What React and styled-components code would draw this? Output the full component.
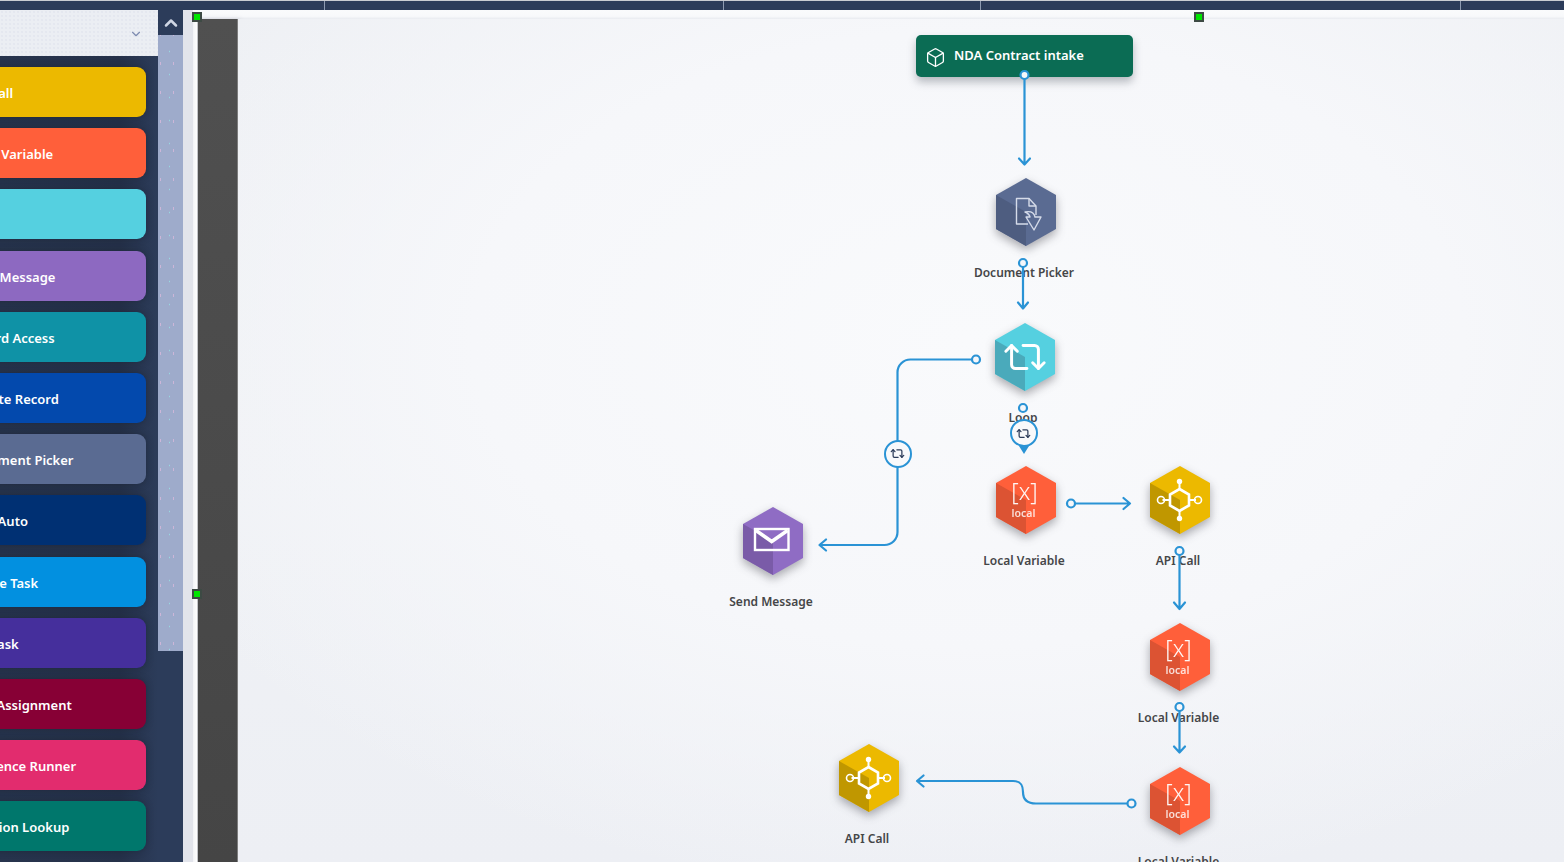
import React from 'react';
import styled, { createGlobalStyle } from 'styled-components';
import { Box, ChevronDown, ChevronUp, Repeat2 } from 'lucide-react';

const Global = createGlobalStyle`
  html, body { margin: 0; padding: 0; height: 100%; overflow: hidden; background: #2c3c5a; }
  body { font-family: "Noto Sans", "Open Sans", sans-serif; }
  #root { height: 100%; }
`;

const Page = styled.div`
  width: 1564px; height: 862px; display: flex; flex-direction: column; overflow: hidden;
`;
const TopBar = styled.div`
  height: 9px; flex: none; display: flex; background: #2c3c5a; border-top: 1px solid #c9ccd2;
  background-image: radial-gradient(#3a4c6e 0.6px, transparent 0.7px); background-size: 4px 4px;
`;
const TopSegment = styled.div`
  flex: ${p => (p.$w ? `0 0 ${p.$w}px` : '1')}; box-sizing: border-box;
  border-right: ${p => (p.$w ? '1px solid #8f9cb3' : 'none')};
`;
const Main = styled.div`
  flex: 1; display: flex; min-height: 0;
`;
const Sidebar = styled.aside`
  width: 183px; flex: none; display: flex; background: #2c3c5a;
  background-image: radial-gradient(rgba(255,255,255,.035) 0.6px, transparent 0.7px); background-size: 4px 4px;
`;
const Palette = styled.div`
  width: 158px; flex: none; display: flex; flex-direction: column; overflow: hidden;
  background: linear-gradient(90deg, #27344d 0, #253149 120px, #2c3c5a 158px);
`;
const PaletteHead = styled.div`
  height: 46px; flex: none; display: flex; align-items: center; justify-content: flex-end;
  padding: 0 15px 0 0; box-sizing: border-box; background: #ebeef3; color: #7d8bb0;
  background-image: radial-gradient(#dcdfe9 0.6px, transparent 0.8px); background-size: 4px 4px;
  svg { margin-top: 1px; }
`;
const ToolList = styled.div`
  display: flex; flex-direction: column; gap: 11.2px; padding-top: 11px; margin-left: -90px;
`;
const Tool = styled.div`
  width: 236px; height: 50px; flex: none; box-sizing: border-box; padding-left: 55px;
  display: flex; align-items: center; border-radius: 9px; background-color: ${p => p.$bg};
  color: #fff; font-size: 13px; font-weight: 600; white-space: nowrap;
  box-shadow: 0 0 7px rgba(20,28,45,.45);
  span { position: relative; top: 1px; }
`;
const SideStrip = styled.div`
  width: 25px; flex: none; display: flex; flex-direction: column;
`;
const CollapseButton = styled.div`
  height: 25px; flex: none; display: flex; align-items: center; justify-content: center; color: #cfd6e4;
`;
const StripBody = styled.div`
  height: 616px; flex: none; background: #9eabcb;
  background-image:
    radial-gradient(rgba(150,235,235,.7) 0.5px, transparent 0.8px),
    radial-gradient(rgba(235,190,225,.6) 0.5px, transparent 0.8px);
  background-size: 17px 23px, 13px 29px; background-position: 3px 5px, 9px 14px;
`;
const Canvas = styled.main`
  position: relative; flex: 1; display: flex; min-width: 0; overflow: hidden;
  background: linear-gradient(90deg, #e2e4eb, #eff0f5);
`;
const Gutter = styled.div`
  width: 10px; flex: none;
`;
const Sheet = styled.div`
  flex: 1; min-width: 0; display: flex; flex-direction: column;
`;
const SheetTop = styled.div`
  height: 9px; flex: none; background: linear-gradient(180deg, #fafbfc 0, #f8f9fb 70%, #e9ebf0 100%);
`;
const SheetBody = styled.div`
  flex: 1; display: flex; min-height: 0;
`;
const WhiteEdge = styled.div`
  width: 5px; flex: none; background: linear-gradient(90deg, #f2f3f6, #fff 70%, #a9abb0 100%);
`;
const Rail = styled.div`
  width: 39px; flex: none; background: linear-gradient(180deg, #505050, #454545);
  border-right: 1px solid #7d7d7d; box-shadow: 2px 0 4px rgba(120,125,140,.25);
`;
const Flow = styled.div`
  flex: 1;
  background:
    radial-gradient(900px 560px at 55% 38%, #f9fafc 0, #f6f7fa 55%, rgba(246,247,250,0) 100%),
    linear-gradient(180deg, #eef0f4, #eff1f5 60%, #edeff4);
`;
const Wires = styled.svg`
  position: absolute; left: 0; top: 0; width: 1381px; height: 852px; z-index: 3; pointer-events: none;
`;
const Wire = styled.path`
  fill: none; stroke: #2a93d5; stroke-width: 2.2; stroke-linecap: round; stroke-linejoin: round;
`;
const Port = styled.circle`
  fill: #f6f7fa; stroke: #2a93d5; stroke-width: 2.2;
`;
const Handle = styled.div`
  position: absolute; z-index: 4; left: ${p => p.$x - 183 - 5}px; top: ${p => p.$y - 10 - 5}px;
  width: 10px; height: 10px; box-sizing: border-box; background: #00e600; border: 2px solid #3d4a44;
`;
const StartNode = styled.div`
  position: absolute; z-index: 2; left: 733px; top: 25px; width: 217px; height: 42px; box-sizing: border-box;
  display: flex; align-items: center; gap: 8px; padding: 0 0 3px 9px; border-radius: 5px;
  background: #0b6c54; color: #fff; font-size: 13px; font-weight: 600;
  box-shadow: 0 5px 9px rgba(60,70,80,.35);
  svg { margin-top: 5px; }
`;
const Node = styled.div`
  position: absolute; z-index: 2; left: ${p => p.$x - 183 - 80}px; top: ${p => p.$y - 10 - 34}px;
  width: 160px; display: flex; flex-direction: column; align-items: center;
`;
const HexArt = styled.svg`
  width: 60px; height: 68px; display: block; margin-left: ${p => p.$shift ?? 3}px; overflow: visible;
  filter: drop-shadow(0 4px 5px rgba(40,40,50,.38));
`;
const NodeLabel = styled.div`
  margin-top: 18px; line-height: 18px; font-size: 12px; font-weight: 600; color: #454648; white-space: nowrap;
`;
const Badge = styled.div`
  position: absolute; z-index: 4; left: ${p => p.$x - 183 - 14}px; top: ${p => p.$y - 10 - 14}px;
  width: 28px; height: 28px; box-sizing: border-box; border-radius: 50%; border: 2.4px solid #2a93d5;
  background: #f8f9fb; color: #2c3c5a; display: flex; align-items: center; justify-content: center;
  ${p => p.$pin && `
    &::after {
      content: ''; position: absolute; left: 50%; bottom: -9px; margin-left: -5px;
      border-left: 5px solid transparent; border-right: 5px solid transparent; border-top: 8px solid #2a93d5;
    }
  `}
`;
const HexWord = styled.text`
  fill: #fff; text-anchor: middle; font-family: "Noto Sans", sans-serif;
  font-size: ${p => p.$size}px; font-weight: ${p => p.$weight}; opacity: ${p => p.$opacity};
`;

const Hex = ({ color, dark, children }) => (
  <HexArt viewBox="0 0 60 68">
    <polygon points="30,0 60,17 60,51 30,68 0,51 0,17" fill={color} />
    <polygon points="0,17 30,34 30,68 0,51" fill={dark} />
    {children}
  </HexArt>
);

const DocIcon = () => (
  <g fill="none" stroke="#d5dbe9" strokeWidth="1.4" strokeLinejoin="round">
    <path d="M32 46H20.5V20.5H33L40 28V37" />
    <path d="M33 20.5V28H40" />
    <path d="M29 34c5-1 9 0 10 5h6l-7 13-8-13h4c-.5-2-2.500-4-5-5z" fill="#5a6b92" />
  </g>
);
const LoopIcon = () => <Repeat2 x={7} y={11} size={46} color="#fff" strokeWidth={1.55} />;
const LocalIcon = () => (
  <>
    <HexWord x="28.500" y="34" $size={23} $weight={300} $opacity={0.95}>[x]</HexWord>
    <HexWord x="27.500" y="51" $size={10.500} $weight={600} $opacity={0.8}>local</HexWord>
  </>
);
const ApiIcon = () => (
  <g fill="none" stroke="#fff" strokeWidth="2">
    <polygon points="29.500,23 39,28.500 39,39.500 29.500,45 20,39.500 20,28.500" strokeWidth="2.600" />
    <path d="M29.500 16v7M29.500 45v7M12.500 34H20M39 34h7" />
    <circle cx="29.500" cy="15.500" r="2.700" fill="#fff" stroke="none" />
    <circle cx="29.500" cy="52.500" r="2.700" fill="#fff" stroke="none" />
    <circle cx="11" cy="34" r="3.500" strokeWidth="1.600" />
    <circle cx="48" cy="34" r="3.500" strokeWidth="1.600" />
  </g>
);
const MailIcon = () => (
  <g fill="none" stroke="#fff">
    <rect x="12" y="22" width="33.500" height="21" strokeWidth="2.400" />
    <path d="M13 23.500 28.700 34.500 44.500 23.500" strokeWidth="3.600" />
  </g>
);

const kinds = {
  doc: { color: '#5a6b92', dark: '#4e5d80', Icon: DocIcon },
  loop: { color: '#55d0e0', dark: '#4aaabb', Icon: LoopIcon },
  local: { color: '#ff5f3a', dark: '#dc5333', Icon: LocalIcon },
  api: { color: '#ecb900', dark: '#c09700', Icon: ApiIcon },
  mail: { color: '#8f6cc4', dark: '#7a5ba8', Icon: MailIcon },
};

const tools = [
  ['#ecb900', 'API Call'],
  ['#ff5f3a', 'Local Variable'],
  ['#55d0e0', 'Loop'],
  ['#8d69c1', 'Send Message'],
  ['#0f92a6', 'Record Access'],
  ['#0349ad', 'Update Record'],
  ['#5a6b92', 'Document Picker'],
  ['#003073', 'Flow Auto'],
  ['#0290e0', 'Create Task'],
  ['#452f9c', 'Get Task'],
  ['#870035', 'Task Assignment'],
  ['#e22c6e', 'Sequence Runner'],
  ['#00776c', 'Decision Lookup'],
];

const nodes = [
  ['doc', 'Document Picker', 1024, 212],
  ['loop', 'Loop', 1023, 356.500],
  ['local', 'Local Variable', 1024, 500],
  ['api', 'API Call', 1178, 500],
  ['mail', 'Send Message', 771, 541],
  ['local', 'Local Variable', 1178.500, 656.500],
  ['local', 'Local Variable', 1178.500, 800.500],
  ['api', 'API Call', 867, 777.500],
];

const wires = [
  'M1024.500 75V164M1019 158.500l5.500 6 5.500-6',
  'M1023 263V308M1018 302.500l5 6 5-6',
  'M976 359.500H911a13 13 0 0 0-13.500 13.500V532a13 13 0 0 1-13 13H820M826 539.500l-6.500 5.500 6.500 5.500',
  'M1071 503.500H1130M1123.500 498l6.500 5.500-6.500 5.500',
  'M1179.500 551V608.500M1174 602.500l5.500 6.500 5.500-6.500',
  'M1179.500 707V752M1174 746.500l5.500 6 5.500-6',
  'M1131.500 803.500H1036c-9 0-13-4-13-11.500 0-8-3-11-10-11H917M923.500 775.500l-6.500 5.500 6.500 5.500',
];
const ports = [[1024.500, 75], [1023, 263], [1023, 408], [976, 359.500], [1071, 503.500], [1179.500, 551], [1179.500, 707], [1131.500, 803.500]];

export default function App() {
  return (
    <Page>
      <Global />
      <TopBar>
        <TopSegment $w={325} />
        <TopSegment $w={399} />
        <TopSegment $w={257} />
        <TopSegment $w={480} />
        <TopSegment />
      </TopBar>
      <Main>
        <Sidebar>
          <Palette>
            <PaletteHead><ChevronDown size={14} strokeWidth={2} /></PaletteHead>
            <ToolList>
              {tools.map(([bg, name]) => (
                <Tool key={name} $bg={bg}><span>{name}</span></Tool>
              ))}
            </ToolList>
          </Palette>
          <SideStrip>
            <CollapseButton><ChevronUp size={20} strokeWidth={3} /></CollapseButton>
            <StripBody />
          </SideStrip>
        </Sidebar>
        <Canvas>
          <Gutter />
          <Sheet>
            <SheetTop />
            <SheetBody>
              <WhiteEdge />
              <Rail />
              <Flow />
            </SheetBody>
          </Sheet>

          <Handle $x={196.500} $y={17} />
          <Handle $x={1199} $y={17} />
          <Handle $x={196.500} $y={593.500} />

          <StartNode>
            <Box size={21} strokeWidth={1.500} />
            NDA Contract intake
          </StartNode>

          {nodes.map(([kind, label, x, y], i) => {
            const { color, dark, Icon } = kinds[kind];
            return (
              <Node key={i} $x={x} $y={y}>
                <Hex color={color} dark={dark}><Icon /></Hex>
                <NodeLabel>{label}</NodeLabel>
              </Node>
            );
          })}

          <Wires viewBox="183 10 1381 852">
            {wires.map(d => <Wire key={d} d={d} />)}
            {ports.map(([cx, cy]) => <Port key={`${cx}-${cy}`} cx={cx} cy={cy} r="4" />)}
          </Wires>

          <Badge $x={1023.500} $y={433} $pin><Repeat2 size={15} strokeWidth={2} /></Badge>
          <Badge $x={897.500} $y={453.500}><Repeat2 size={15} strokeWidth={2} /></Badge>
        </Canvas>
      </Main>
    </Page>
  );
}
